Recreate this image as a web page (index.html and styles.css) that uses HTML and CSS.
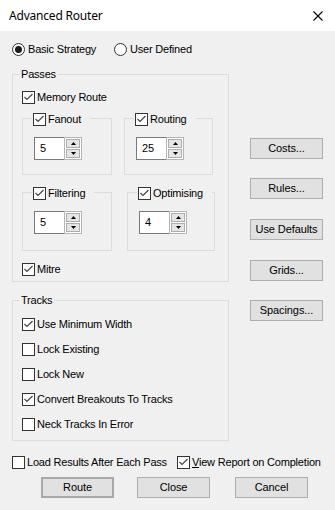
FILE: index.html
```html
<!DOCTYPE html>
<html>
<head>
<meta charset="utf-8">
<link rel="stylesheet" href="styles.css">
</head>
<body>
<div class="window">
  <div class="titlebar">
    <span class="title">Advanced Router</span>
    <svg class="close" width="10" height="10" viewBox="0 0 10 10"><path d="M0.5 0.5 L9.5 9.5 M9.5 0.5 L0.5 9.5" stroke="#000" stroke-width="1.1" fill="none"/></svg>
  </div>
  <div class="content">
    <div class="radios">
      <label class="radio first"><span class="rb on"><span class="dot"></span></span>Basic Strategy</label>
      <label class="radio"><span class="rb"></span>User Defined</label>
    </div>
    <div class="main">
      <div class="left">
        <fieldset class="group">
          <legend class="glegend">Passes</legend>
          <div class="passes-inner">
            <label class="cb"><span class="box"><svg width="11" height="11" viewBox="0 0 11 11"><polyline points="1.5,5 4,7.5 9.5,2" fill="none" stroke="#444" stroke-width="1.2"/></svg></span>Memory Route</label>
            <div class="subrow r1">
              <fieldset class="sub w90">
                <legend class="slegend"><label class="cb"><span class="box"><svg width="11" height="11" viewBox="0 0 11 11"><polyline points="1.5,5 4,7.5 9.5,2" fill="none" stroke="#444" stroke-width="1.2"/></svg></span>Fanout</label></legend>
                <div class="sub-inner pb14">
                  <div class="spin"><div class="edit">5</div><div class="arrows"><span class="ab"><svg width="5" height="3" viewBox="0 0 5 3"><polygon points="0,3 5,3 2.5,0" fill="#000"/></svg></span><span class="ab"><svg width="5" height="3" viewBox="0 0 5 3"><polygon points="0,0 5,0 2.5,3" fill="#000"/></svg></span></div></div>
                </div>
              </fieldset>
              <fieldset class="sub w89">
                <legend class="slegend"><label class="cb"><span class="box"><svg width="11" height="11" viewBox="0 0 11 11"><polyline points="1.5,5 4,7.5 9.5,2" fill="none" stroke="#444" stroke-width="1.2"/></svg></span>Routing</label></legend>
                <div class="sub-inner pb14">
                  <div class="spin"><div class="edit">25</div><div class="arrows"><span class="ab"><svg width="5" height="3" viewBox="0 0 5 3"><polygon points="0,3 5,3 2.5,0" fill="#000"/></svg></span><span class="ab"><svg width="5" height="3" viewBox="0 0 5 3"><polygon points="0,0 5,0 2.5,3" fill="#000"/></svg></span></div></div>
                </div>
              </fieldset>
            </div>
            <div class="subrow r2">
              <fieldset class="sub w90">
                <legend class="slegend"><label class="cb"><span class="box"><svg width="11" height="11" viewBox="0 0 11 11"><polyline points="1.5,5 4,7.5 9.5,2" fill="none" stroke="#444" stroke-width="1.2"/></svg></span>Filtering</label></legend>
                <div class="sub-inner pb16">
                  <div class="spin"><div class="edit">5</div><div class="arrows"><span class="ab"><svg width="5" height="3" viewBox="0 0 5 3"><polygon points="0,3 5,3 2.5,0" fill="#000"/></svg></span><span class="ab"><svg width="5" height="3" viewBox="0 0 5 3"><polygon points="0,0 5,0 2.5,3" fill="#000"/></svg></span></div></div>
                </div>
              </fieldset>
              <fieldset class="sub w88">
                <legend class="slegend"><label class="cb"><span class="box"><svg width="11" height="11" viewBox="0 0 11 11"><polyline points="1.5,5 4,7.5 9.5,2" fill="none" stroke="#444" stroke-width="1.2"/></svg></span>Optimising</label></legend>
                <div class="sub-inner pb16">
                  <div class="spin"><div class="edit">4</div><div class="arrows"><span class="ab"><svg width="5" height="3" viewBox="0 0 5 3"><polygon points="0,3 5,3 2.5,0" fill="#000"/></svg></span><span class="ab"><svg width="5" height="3" viewBox="0 0 5 3"><polygon points="0,0 5,0 2.5,3" fill="#000"/></svg></span></div></div>
                </div>
              </fieldset>
            </div>
            <label class="cb mitre"><span class="box"><svg width="11" height="11" viewBox="0 0 11 11"><polyline points="1.5,5 4,7.5 9.5,2" fill="none" stroke="#444" stroke-width="1.2"/></svg></span>Mitre</label>
          </div>
        </fieldset>
        <fieldset class="group tracks">
          <legend class="glegend">Tracks</legend>
          <div class="tracks-inner">
            <label class="cb"><span class="box"><svg width="11" height="11" viewBox="0 0 11 11"><polyline points="1.5,5 4,7.5 9.5,2" fill="none" stroke="#444" stroke-width="1.2"/></svg></span>Use Minimum Width</label>
            <label class="cb"><span class="box"></span>Lock Existing</label>
            <label class="cb"><span class="box"></span>Lock New</label>
            <label class="cb"><span class="box"><svg width="11" height="11" viewBox="0 0 11 11"><polyline points="1.5,5 4,7.5 9.5,2" fill="none" stroke="#444" stroke-width="1.2"/></svg></span>Convert Breakouts To Tracks</label>
            <label class="cb"><span class="box"></span>Neck Tracks In Error</label>
          </div>
        </fieldset>
      </div>
      <div class="side">
        <button class="btn">Costs...</button>
        <button class="btn">Rules...</button>
        <button class="btn plus1">Use Defaults</button>
        <button class="btn plus1">Grids...</button>
        <button class="btn">Spacings...</button>
      </div>
    </div>
    <div class="options">
      <label class="cb opt-first"><span class="box"></span>Load Results After Each Pass</label>
      <label class="cb"><span class="box"><svg width="11" height="11" viewBox="0 0 11 11"><polyline points="1.5,5 4,7.5 9.5,2" fill="none" stroke="#444" stroke-width="1.2"/></svg></span><span><u>V</u>iew Report on Completion</span></label>
    </div>
    <div class="actions">
      <button class="btn default">Route</button>
      <button class="btn close-btn">Close</button>
      <button class="btn cancel-btn">Cancel</button>
    </div>
  </div>
</div>
</body>
</html>
```

FILE: styles.css
```css
* { box-sizing: border-box; }
html, body { margin: 0; padding: 0; }
body {
  width: 335px;
  height: 510px;
  background: #f0f0f0;
  font-family: "Liberation Sans", Arial, sans-serif;
  font-size: 11px;
  letter-spacing: -0.2px;
  color: #000;
  overflow: hidden;
}
.window { width: 335px; height: 510px; }
.titlebar {
  height: 31px;
  background: #fff;
  display: flex;
  align-items: center;
  justify-content: space-between;
  padding: 0 12px 0 9px;
}
.title {
  font-family: "Noto Sans", "Open Sans", sans-serif;
  font-size: 12px;
  letter-spacing: -0.2px;
  line-height: 14px;
  margin-top: 1px;
}
.close { display: block; margin-top: 1px; }

.content { padding: 12px 0 0 12px; }

.radios { display: flex; height: 13px; }
.radio { display: flex; align-items: center; height: 13px; line-height: 13px; }
.radio.first { width: 102px; }
.rb {
  width: 13px; height: 13px;
  border: 1px solid #333;
  border-radius: 50%;
  background: #fff;
  margin-right: 3px;
  display: flex;
  align-items: center;
  justify-content: center;
  flex: none;
}
.dot { width: 7px; height: 7px; border-radius: 50%; background: #1a1a1a; }

.main { display: flex; margin-top: 12px; }
.left { width: 217px; flex: none; }

.group {
  margin: 0;
  padding: 0;
  border: 1px solid #dcdcdc;
  width: 217px;
  min-width: 0;
}
.glegend {
  margin-left: 6px;
  padding: 0 2px;
  line-height: 13px;
  height: 13px;
}
.passes-inner { padding: 10px 0 5px 9px; }
.tracks { margin-top: 12px; }
.tracks-inner {
  padding: 11px 0 9px 9px;
  display: flex;
  flex-direction: column;
  gap: 12px;
}

.cb {
  display: flex;
  align-items: center;
  height: 13px;
  line-height: 13px;
  white-space: nowrap;
}
.box {
  width: 13px; height: 13px;
  border: 1px solid #333;
  background: #fff;
  margin-right: 2px;
  flex: none;
  display: flex;
}
.box svg { display: block; }

.subrow { display: flex; }
.r1 { margin-top: 9px; gap: 12px; }
.r2 { margin-top: 12px; gap: 15px; }
.sub {
  margin: 0;
  padding: 0;
  border: 1px solid #dcdcdc;
  min-width: 0;
}
.w90 { width: 90px; }
.w89 { width: 89px; }
.w88 { width: 88px; }
.slegend {
  margin-left: 9px;
  padding: 0 9px 0 1px;
  height: 11px;
}
.slegend .cb { height: 11px; align-items: flex-start; line-height: 13px; }
.sub-inner { padding: 13px 0 0 11px; }
.pb14 { padding-bottom: 14px; }
.pb16 { padding-bottom: 16px; }

.spin { display: flex; height: 23px; }
.edit {
  width: 30px;
  height: 23px;
  background: #fff;
  border: 1px solid #7a7a7a;
  border-right: none;
  padding-left: 5px;
  line-height: 21px;
}
.arrows {
  width: 18px;
  height: 23px;
  display: flex;
  flex-direction: column;
  border: 1px solid #b4b4b4;
  background: #fff;
  padding: 1px;
  gap: 1px;
}
.ab {
  flex: 1;
  background: #e5e5e5;
  border: 1px solid #adadad;
  display: flex;
  align-items: center;
  justify-content: center;
}
.ab svg { display: block; }

.mitre { margin-top: 12px; }

.side {
  margin-left: 21px;
  padding-top: 70px;
  display: flex;
  flex-direction: column;
  gap: 19px;
}
.side .plus1 { margin-top: 1px; }

.btn {
  width: 73px;
  height: 21px;
  background: #e1e1e1;
  border: 1px solid #adadad;
  font-family: "Liberation Sans", Arial, sans-serif;
  font-size: 11px;
  letter-spacing: -0.1px;
  color: #000;
  padding: 0;
  margin: 0;
  line-height: 19px;
  text-align: center;
}

.options { display: flex; margin-top: 15px; }
.opt-first { width: 165px; }
.options u { text-decoration: underline; text-underline-offset: 1px; }

.actions { display: flex; margin-top: 8px; padding-left: 29px; }
.btn.default { border: 2px solid #a8a8a8; line-height: 17px; }
.close-btn { margin-left: 23px; }
.cancel-btn { margin-left: 25px; }
```
